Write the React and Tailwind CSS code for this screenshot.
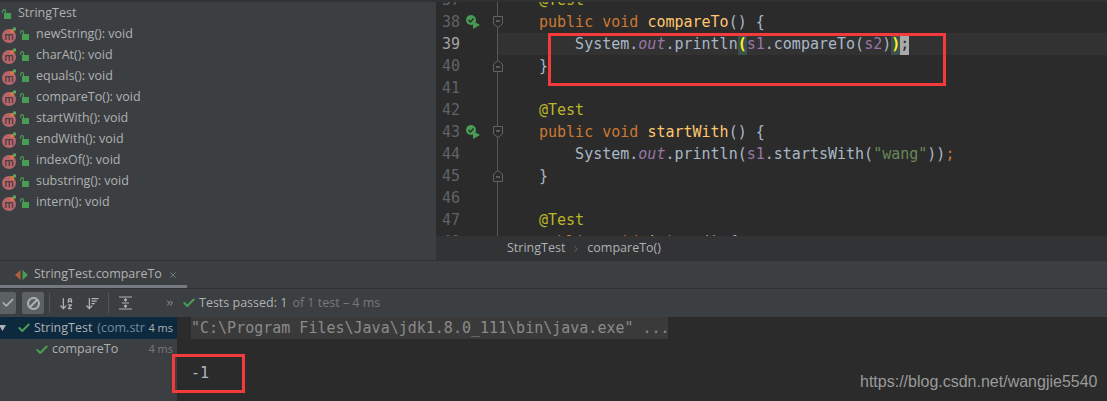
import { Check, X, ArrowDownAZ, ArrowDownWideNarrow, ChevronRight, ChevronsRight } from "lucide-react";

const methods = [
  "newString(): void",
  "charAt(): void",
  "equals(): void",
  "compareTo(): void",
  "startWith(): void",
  "endWith(): void",
  "indexOf(): void",
  "substring(): void",
  "intern(): void",
];

const kw = "text-[#cc7832]";
const fn = "text-[#ffc66d]";
const anno = "text-[#bbb529]";
const field = "text-[#9876aa]";
const str = "text-[#6a8759]";

function Lock() {
  return (
    <svg width="9" height="10" viewBox="0 0 9 10" className="shrink-0">
      <rect x="2" y="4" width="7" height="6" fill="#499c54" />
      <path d="M0.7 4V2a1.400 1.400 0 0 1 2.800 0v2" fill="none" stroke="#499c54" strokeWidth="1.1" />
    </svg>
  );
}

function MethodIcon() {
  return (
    <svg width="16" height="16" viewBox="0 0 16 16" className="shrink-0">
      <circle cx="7" cy="9" r="7" fill="#b5666c" />
      <text x="7" y="12.500" textAnchor="middle" fontSize="11" fontFamily="Liberation Sans, sans-serif" fill="#2f2f2f">m</text>
      <circle cx="10" cy="4" r="2" fill="#e0773a" />
      <path d="M11 .5h3v3h-3z" fill="#59a869" />
    </svg>
  );
}

function RunIcon() {
  return (
    <svg width="14" height="14" viewBox="0 0 14 14">
      <circle cx="5" cy="5" r="5" fill="#499c54" />
      <path d="M2.500 5l2 2 3-3.500" fill="none" stroke="#2b2b2b" strokeWidth="1.400" />
      <path d="M7 6l7 4-7 4z" fill="#499c54" />
    </svg>
  );
}

function Fold({ end }) {
  return (
    <svg width="10" height="12" viewBox="0 0 10 12" className="absolute left-[57px] top-[5px]">
      <path
        d={end ? "M.5 11.500V4L5 .5 9.500 4v7.500z" : "M.5 .5h9V8L5 11.500.5 8z"}
        fill="#2b2b2b"
        stroke="#606366"
      />
      <path d={end ? "M3 7h4" : "M3 5h4"} stroke="#8a8d8f" />
    </svg>
  );
}

function Row({ n, run, fold, end, active, children }) {
  return (
    <div className="relative flex h-[22px] items-center">
      <div className={`flex h-full w-[62px] shrink-0 items-center border-r border-[#55585a] pl-[6px] ${active ? "text-[#a4a3a3]" : "text-[#606366]"}`}>
        <span className="w-[24px]">{n}</span>
        {run && <RunIcon />}
      </div>
      <div className={`flex h-full flex-1 items-center whitespace-pre pl-[41px] ${active ? "bg-[#323232]" : ""}`}>
        {children}
      </div>
      {fold && <Fold end={end} />}
    </div>
  );
}

export default function App() {
  return (
    <div className="relative flex h-[401px] w-[1107px] flex-col overflow-hidden bg-[#3c3f41] font-['Open_Sans',sans-serif] text-[#a9b7c6]">
      <div className="flex h-[260px] shrink-0 border-t-2 border-[#2f3132]">
        <div className="w-[436px] shrink-0 pl-[2px] pt-[1px] text-[12.5px] text-[#afb1b3]">
          <div className="flex h-[21px] items-center gap-[7px]">
            <Lock />
            <span>StringTest</span>
          </div>
          {methods.map((m) => (
            <div key={m} className="flex h-[21px] items-center">
              <div className="flex items-center gap-[2px]">
                <MethodIcon />
                <Lock />
              </div>
              <span className="ml-[7px]">{m}</span>
            </div>
          ))}
        </div>

        <div className="flex min-w-0 flex-1 flex-col">
          <div className="h-[234px] overflow-hidden bg-[#2b2b2b] font-['DejaVu_Sans_Mono',monospace] text-[15px]">
            <div className="-mt-[13px]">
              <Row n="37"><span className={anno}>@Test</span></Row>
              <Row n="38" run fold><span className={kw}>public void </span><span className={fn}>compareTo</span>() {"{"}</Row>
              <Row n="39" active>
                {"    System."}<span className={`italic ${field}`}>out</span>.println
                <span className="bg-[#3b514d] font-bold text-[#ffef28]">(</span>
                <span className={field}>s1</span>.compareTo(<span className={field}>s2</span>)
                <span className="bg-[#3b514d] font-bold text-[#ffef28]">)</span>
                <span className="bg-[#a9a9a9] text-[#2b2b2b]">;</span>
              </Row>
              <Row n="40" fold end>{"}"}</Row>
              <Row n="41" />
              <Row n="42"><span className={anno}>@Test</span></Row>
              <Row n="43" run fold><span className={kw}>public void </span><span className={fn}>startWith</span>() {"{"}</Row>
              <Row n="44">
                {"    System."}<span className={`italic ${field}`}>out</span>.println(<span className={field}>s1</span>.startsWith(<span className={str}>"wang"</span>))<span className={kw}>;</span>
              </Row>
              <Row n="45" fold end>{"}"}</Row>
              <Row n="46" />
              <Row n="47"><span className={anno}>@Test</span></Row>
              <Row n="48"><span className={kw}>public void </span><span className={fn}>intern</span>() {"{"}</Row>
            </div>
          </div>
          <div className="flex h-[24px] items-center gap-[6px] border-t border-[#323232] bg-[#313335] pl-[71px] text-[12.5px] text-[#afb1b3]">
            <span>StringTest</span>
            <ChevronRight size={10} className="text-[#6e6e6e]" />
            <span>compareTo()</span>
          </div>
        </div>
      </div>

      <div className="flex h-[28px] shrink-0 flex-col border-t border-[#2f3132]">
        <div className="flex flex-1 items-center pl-[15px] pt-[3px] text-[12.5px] text-[#afb1b3]">
          <svg width="13" height="12" viewBox="0 0 13 12">
            <path d="M5.500 1v10L0 6z" fill="#b0603a" />
            <path d="M7.500 1v10L13 6z" fill="#499c54" />
          </svg>
          <span className="ml-[6px]">StringTest.compareTo</span>
          <X size={10} className="ml-[6px] text-[#7f8284]" />
        </div>
        <div className="h-[3px] w-[187px] bg-[#747a80]" />
      </div>

      <div className="flex h-[29px] shrink-0 items-center border-t border-[#2f3132] text-[12.5px]">
        <div className="flex h-[22px] w-[16px] items-center justify-center rounded-r-[2px] bg-[#5c6164]">
          <Check size={14} strokeWidth={3} className="text-[#afb1b3]" />
        </div>
        <div className="ml-[6px] flex h-[22px] w-[22px] items-center justify-center rounded-[2px] bg-[#5c6164]">
          <svg width="15" height="15" viewBox="0 0 15 15">
            <circle cx="7.500" cy="7.500" r="5.500" fill="none" stroke="#afb1b3" strokeWidth="2" />
            <path d="M4 11l7-7" stroke="#afb1b3" strokeWidth="2" />
          </svg>
        </div>
        <div className="ml-[5px] h-[20px] w-px bg-[#515557]" />
        <ArrowDownAZ size={15} className="ml-[9px] text-[#afb1b3]" />
        <ArrowDownWideNarrow size={15} className="ml-[11px] text-[#afb1b3]" />
        <div className="ml-[8px] h-[20px] w-px bg-[#515557]" />
        <svg width="13" height="14" viewBox="0 0 13 14" className="ml-[10px]">
          <path d="M0 1h13M0 13h13M3 7h7M6.500 2v3M5 3.500L6.500 5 8 3.500M6.500 12V9M5 10.500L6.500 9 8 10.500" fill="none" stroke="#afb1b3" strokeWidth="1.200" />
        </svg>
        <ChevronsRight size={10} className="ml-[33px] text-[#afb1b3]" />
        <Check size={14} strokeWidth={3.500} className="ml-[7px] text-[#499c54]" />
        <span className="ml-[3px] text-[#afb1b3]">Tests passed: 1</span>
        <span className="ml-[5px] text-[#787878]">of 1 test – 4 ms</span>
      </div>

      <div className="flex min-h-0 flex-1">
        <div className="w-[177px] shrink-0 text-[12.5px]">
          <div className="flex h-[22px] items-center bg-[#0d293e] pr-[4px]">
            <svg width="8" height="8" viewBox="0 0 8 8" className="ml-[-1px]">
              <path d="M0 1h7L3.500 7z" fill="#afb1b3" />
            </svg>
            <Check size={14} strokeWidth={3.500} className="ml-[10px] text-[#499c54]" />
            <span className="ml-[3px] text-[#afb1b3]">StringTest</span>
            <span className="ml-[5px] w-[49px] overflow-hidden whitespace-nowrap text-[#6e8ba3]">(com.stringtest)</span>
            <span className="ml-auto text-[11px] text-[#afb1b3]">4 ms</span>
          </div>
          <div className="flex h-[21px] items-center pr-[4px]">
            <Check size={14} strokeWidth={3.500} className="ml-[35px] text-[#499c54]" />
            <span className="ml-[3px] text-[#afb1b3]">compareTo</span>
            <span className="ml-auto text-[11px] text-[#787878]">4 ms</span>
          </div>
        </div>
        <div className="min-w-0 flex-1 bg-[#2b2b2b] pl-[14px] font-['DejaVu_Sans_Mono',monospace] text-[15px]">
          <div className="flex h-[22px] w-[477px] items-center whitespace-pre bg-[#3a3a3a] text-[#8a8a8a]">"C:\Program Files\Java\jdk1.8.0_111\bin\java.exe" ...</div>
          <div className="mt-[23px] flex h-[22px] items-center text-[#a9b7c6]">-1</div>
        </div>
      </div>

      <div className="absolute left-[548px] top-[33px] h-[53px] w-[398px] border-[3px] border-[#f43a3a]" />
      <div className="absolute left-[172px] top-[354px] h-[39px] w-[73px] border-[3px] border-[#f43a3a]" />
      <div className="absolute left-[860px] top-[370px] font-['Liberation_Sans',sans-serif] text-[16px] text-[#9a9a9a]">https://blog.csdn.net/wangjie5540</div>
    </div>
  );
}
